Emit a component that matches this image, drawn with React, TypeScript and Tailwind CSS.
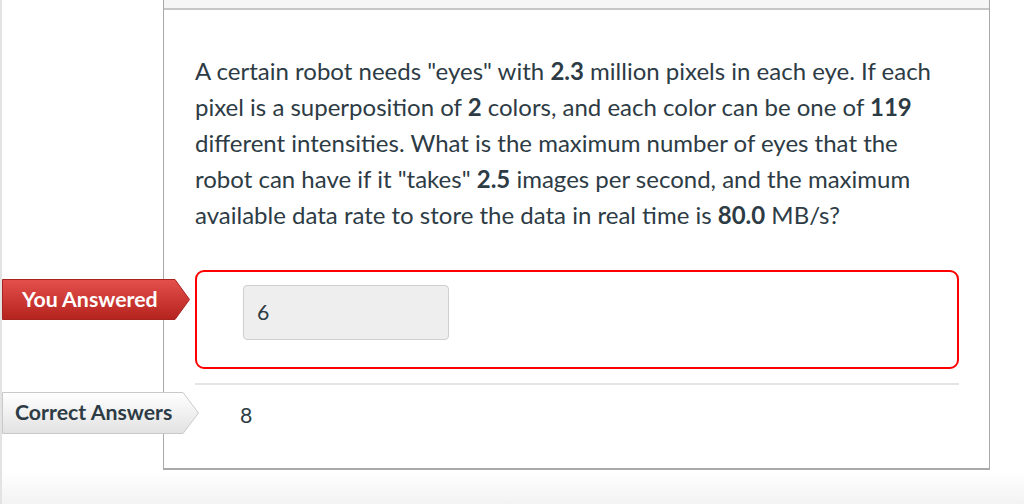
import React from 'react';

function Ribbon({ label, variant }: { label: string; variant: 'red' | 'gray' }) {
  const red = variant === 'red';
  const w = red ? 188 : 197;
  const h = red ? 41 : 42;
  const arrow = red ? 15 : 16;
  const id = red ? 'ribbon-red' : 'ribbon-gray';
  return (
    <div className="relative" style={{ width: w, height: h }}>
      <svg className="absolute inset-0" width={w} height={h} viewBox={`0 0 ${w} ${h}`}>
        <defs>
          <linearGradient id={id} x1="0" y1="0" x2="0" y2="1">
            <stop offset="0" stopColor={red ? '#e4504c' : '#ffffff'} />
            <stop offset="1" stopColor={red ? '#b5231f' : '#e2e2e2'} />
          </linearGradient>
        </defs>
        <polygon
          points={`0.5,0.5 ${w - arrow},0.5 ${w - 0.5},${h / 2} ${w - arrow},${h - 0.5} 0.5,${h - 0.5}`}
          fill={`url(#${id})`}
          stroke={red ? '#a82420' : '#c9c9c9'}
          strokeWidth="1"
        />
      </svg>
      <span
        className={`relative flex h-full items-center text-[21.3px] font-bold ${
          red ? 'pl-[20px] text-white' : 'pl-[13px] text-[#2d3b45]'
        }`}
      >
        {label}
      </span>
    </div>
  );
}

export default function App() {
  return (
    <div className="flex h-[504px] w-[1024px] flex-col overflow-hidden border-l-2 border-[#e3e3e3] bg-white font-['Lato','Noto_Sans',sans-serif] text-[#2d3b45]">
      <div className="ml-[161px] w-[827px] border-x border-b-2 border-[#a9a9a9]">
        {/* header strip */}
        <div className="h-[10px] border-b-2 border-[#c6c6c6] bg-[#f5f5f5]" />

        <div className="pl-[31px] pr-[30px] pt-[43px] pb-[35px]">
          <p className="text-[24px] leading-[36px]">
            A certain robot needs "eyes" with <b>2.3</b> million pixels in each eye. If each pixel is a
            superposition of <b>2</b> colors, and each color can be one of <b>119</b> different
            intensities. What is the maximum number of eyes that the robot can have if it "takes"{' '}
            <b>2.5</b> images per second, and the maximum available data rate to store the data in
            real time is <b>80.0</b> MB/s?
          </p>

          {/* you answered */}
          <div className="relative mt-[37px]">
            <div className="absolute left-[-193px] top-[9px]">
              <Ribbon label="You Answered" variant="red" />
            </div>
            <div className="h-[99px] rounded-[9px] border-2 border-[#ff0000] pl-[46px] pt-[13px]">
              <div className="flex h-[55px] w-[206px] items-center rounded-[4px] border border-[#cfcfcf] bg-[#eeeeee] pl-[13px] text-[21.3px]">
                6
              </div>
            </div>
          </div>

          <div className="mt-[14px] h-[2px] bg-[#e4e4e4]" />

          {/* correct answers */}
          <div className="relative pt-[12px]">
            <div className="absolute left-[-193px] top-[7px]">
              <Ribbon label="Correct Answers" variant="gray" />
            </div>
            <div className="pl-[45px] text-[21.3px] leading-[36px]">8</div>
          </div>
        </div>
      </div>
      <div className="flex-1 bg-gradient-to-b from-white to-[#f3f3f3]" />
    </div>
  );
}
